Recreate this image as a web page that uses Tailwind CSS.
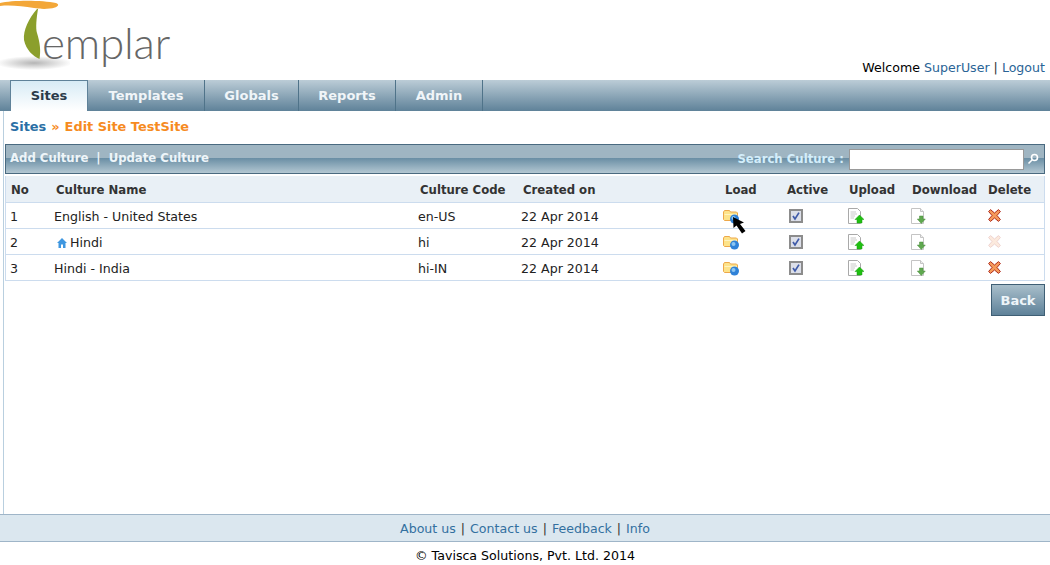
<!DOCTYPE html>
<html lang="en">
<head>
    <meta charset="UTF-8">
    <title>Templar</title>
    <script src="https://cdn.jsdelivr.net/npm/@tailwindcss/browser@4"></script>
</head>
<body class="bg-white font-['DejaVu_Sans',sans-serif] text-[12.6px] text-[#222] h-[565px] overflow-hidden flex flex-col">
    <svg class="hidden">
        <symbol id="folder" viewBox="0 0 17 16">
            <path d="M0.5 4 L1.5 2.5 H6.5 L7.5 4 H13.5 L14.5 5 V12.5 H1.5 L0.5 11.5 Z" fill="#fde38a" stroke="#eda84a"/>
            <path d="M1.5 6.5 H14" stroke="#fff3c0"/>
            <circle cx="11.5" cy="11" r="4.5" fill="#2f82d8"/>
            <circle cx="10.5" cy="10" r="2" fill="#8cc6f2"/>
        </symbol>
        <symbol id="check" viewBox="0 0 14 14">
            <rect x="1" y="1" width="12" height="12" fill="#dcdfe9" stroke="#8c8c8c" stroke-width="2"/>
            <path d="M4 7 L6 10 L10 3.6" fill="none" stroke="#3f5aa8" stroke-width="1.7"/>
        </symbol>
        <symbol id="upload" viewBox="0 0 16 16">
            <path d="M0.5 0.5 H9.5 L12.5 3.5 V15.5 H0.5 Z" fill="#fff" stroke="#a9a9a9"/>
            <path d="M2.5 4 H8 M2.5 6 H9 M2.5 8 H7 M2.5 10 H6" stroke="#c9c9c9"/>
            <path d="M11.5 7 L16 11.5 H14 V15 H9 V11.5 H7 Z" fill="#1fc010" stroke="#1b9a10" stroke-width="0.5"/>
        </symbol>
        <symbol id="download" viewBox="0 0 16 16">
            <path d="M0.5 0.5 H9.5 L12.5 3.5 V15.5 H0.5 Z" fill="#fff" stroke="#c4c4c4"/>
            <path d="M9.5 0.5 V3.5 H12.5" fill="#eee" stroke="#c4c4c4"/>
            <path d="M8.5 8 H12 V11 H14.3 L10.3 15.5 L6.3 11 H8.5 Z" fill="#5fa84f" stroke="#4a8c3d" stroke-width="0.5"/>
        </symbol>
        <symbol id="cross" viewBox="0 0 13 13">
            <path d="M2.5 0.6 L6.5 4 L10.5 0.6 L12.4 2.5 L9 6.5 L12.4 10.5 L10.5 12.4 L6.5 9 L2.5 12.4 L0.6 10.5 L4 6.5 L0.6 2.5 Z" fill="#f59a5a" stroke="#a81c10" stroke-width="0.9"/>
        </symbol>
    </svg>

    <!-- Header -->
    <header class="h-[80px] shrink-0 flex justify-between items-end">
        <div class="relative w-[180px] h-[80px]">
            <svg class="absolute left-0 top-0" width="70" height="75" viewBox="0 0 70 75">
                <defs>
                    <radialGradient id="shade">
                        <stop offset="0" stop-color="#b5b5b5"/>
                        <stop offset="1" stop-color="#ffffff"/>
                    </radialGradient>
                </defs>
                <ellipse cx="34" cy="63" rx="38" ry="7" fill="url(#shade)"/>
                <path d="M0 3 C12 0 42 0 56 3 C59 4 59 6 55 7.5 C48 9.5 40 9 34 8 C22 6 10 5 0 6 Z" fill="#f3a738"/>
                <path d="M37 9 C29 18 23 30 24 40 C26 50 33 56 39.5 59 C41 50 40 43 37 33 C35.5 28 36.5 18 38 9 Z" fill="#8b9f2c"/>
            </svg>
            <span class="absolute left-[42px] top-[14px] font-['Lato',sans-serif] font-light text-[44px] leading-[56px] tracking-[-0.2px] text-[#666]">emplar</span>
        </div>
        <div class="pr-[5px] pb-[2px]">
            <span class="text-black">Welcome</span>
            <a class="text-[#2a6496]">SuperUser</a>
            <span class="text-[#333]">|</span>
            <a class="text-[#2a6496]">Logout</a>
        </div>
    </header>

    <!-- Tabs -->
    <nav class="h-[31px] shrink-0 pl-[10px] flex bg-gradient-to-b from-[#bccdd7] to-[#5f8299] text-[13px] font-bold">
        <a class="h-full w-[78px] flex items-center justify-center border-x border-t border-[#5f8299] bg-gradient-to-b from-[#d7ebf5] to-white text-[#2b3b4a]">Sites</a>
        <a class="h-full w-[117px] flex items-center justify-center border-r border-[#4f7389] text-[#f0f5f8]">Templates</a>
        <a class="h-full w-[94px] flex items-center justify-center border-r border-[#4f7389] text-[#f0f5f8]">Globals</a>
        <a class="h-full w-[97px] flex items-center justify-center border-r border-[#4f7389] text-[#f0f5f8]">Reports</a>
        <a class="h-full w-[87px] flex items-center justify-center border-r border-[#4f7389] text-[#f0f5f8]">Admin</a>
    </nav>

    <!-- Main -->
    <main class="relative flex-1 ml-[3px] mr-[5px] pl-px border-l border-[#b9cfdf]">
        <div class="h-[33px] pl-[5px] pb-[2px] flex items-center gap-[5px] text-[12.9px] font-bold">
            <a class="text-[#2a6fa5]">Sites</a>
            <span class="text-[#f68b1f]">»</span>
            <span class="text-[#f68b1f]">Edit Site TestSite</span>
        </div>

        <div class="h-[30px] flex items-center justify-between pl-[4px] pr-[5px] border border-[#4a6a80] bg-[linear-gradient(to_bottom,#9fb5c2_0%,#9fb5c2_47%,#6b8fa5_48%,#b3c7d2_100%)] text-[11.7px] font-bold text-[#eef5f9]">
            <div class="flex gap-[8px]">
                <a>Add Culture</a>
                <span>|</span>
                <a>Update Culture</a>
            </div>
            <div class="flex items-center">
                <span class="text-[#d3eefb] mr-[5px] pt-px">Search Culture :</span>
                <input type="text" class="w-[175px] h-[21px] bg-white border border-[#999]">
                <svg class="ml-[3px]" width="12" height="12" viewBox="0 0 12 12" fill="none" stroke="#fff" stroke-width="1.6">
                    <circle cx="7.5" cy="4.5" r="3"/>
                    <path d="M5 7 L1.5 10.5"/>
                </svg>
            </div>
        </div>

        <!-- Table -->
        <div class="mt-[2px] border-x border-b border-[#ccdcee]">
            <div class="h-[27px] pl-[4px] grid grid-cols-[44px_364px_103px_204px_62px_62px_63px_76px_1fr] items-center bg-[#e9f0f6] border-b border-[#ccdcee] text-[11.7px] font-bold text-[#333] [&>span]:pt-[4px]">
                <span class="pl-px">No</span>
                <span class="pl-[2px]">Culture Name</span>
                <span class="pl-[2px]">Culture Code</span>
                <span class="pl-[2px]">Created on</span>
                <span>Load</span>
                <span>Active</span>
                <span>Upload</span>
                <span>Download</span>
                <span>Delete</span>
            </div>

            <div class="h-[26px] pl-[4px] grid grid-cols-[44px_364px_103px_204px_62px_62px_63px_76px_1fr] items-center border-b border-[#ccdcee] [&>span]:pt-[4px]">
                <span>1</span>
                <span>English - United States</span>
                <span>en-US</span>
                <span>22 Apr 2014</span>
                <svg class="-ml-[2px]" width="17" height="16"><use href="#folder"/></svg>
                <svg class="ml-[2px]" width="14" height="14"><use href="#check"/></svg>
                <svg class="-ml-px" width="16" height="16"><use href="#upload"/></svg>
                <svg class="-ml-px" width="16" height="16"><use href="#download"/></svg>
                <svg width="13" height="13"><use href="#cross"/></svg>
            </div>

            <div class="h-[26px] pl-[4px] grid grid-cols-[44px_364px_103px_204px_62px_62px_63px_76px_1fr] items-center border-b border-[#ccdcee] [&>span]:pt-[4px]">
                <span>2</span>
                <span class="flex items-center pl-[3px] gap-[3px]">
                    <svg width="10" height="10" viewBox="0 0 10 10" fill="#3f97e0">
                        <path d="M5 0 L10 5 H8.5 V10 H6 V6.5 H4 V10 H1.5 V5 H0 Z"/>
                    </svg>
                    Hindi
                </span>
                <span>hi</span>
                <span>22 Apr 2014</span>
                <svg class="-ml-[2px]" width="17" height="16"><use href="#folder"/></svg>
                <svg class="ml-[2px]" width="14" height="14"><use href="#check"/></svg>
                <svg class="-ml-px" width="16" height="16"><use href="#upload"/></svg>
                <svg class="-ml-px" width="16" height="16"><use href="#download"/></svg>
                <svg class="opacity-20" width="13" height="13"><use href="#cross"/></svg>
            </div>

            <div class="h-[25px] pl-[4px] grid grid-cols-[44px_364px_103px_204px_62px_62px_63px_76px_1fr] items-center [&>span]:pt-[4px]">
                <span>3</span>
                <span>Hindi - India</span>
                <span>hi-IN</span>
                <span>22 Apr 2014</span>
                <svg class="-ml-[2px]" width="17" height="16"><use href="#folder"/></svg>
                <svg class="ml-[2px]" width="14" height="14"><use href="#check"/></svg>
                <svg class="-ml-px" width="16" height="16"><use href="#upload"/></svg>
                <svg class="-ml-px" width="16" height="16"><use href="#download"/></svg>
                <svg width="13" height="13"><use href="#cross"/></svg>
            </div>
        </div>

        <div class="mt-[3px] flex justify-end">
            <button class="w-[54px] h-[32px] pt-[2px] border border-[#3f5f75] bg-gradient-to-b from-[#a9bfcb] to-[#5f8299] text-[13px] font-bold text-[#eef5f9]">Back</button>
        </div>

        <!-- mouse pointer -->
        <svg class="absolute left-[729px] top-[106px]" width="13" height="17" viewBox="0 0 13 17" fill="#000">
            <path d="M0 0 L0.5 11 L3.5 8.5 L9 16.5 L12.5 14 L7 7 L11 5.5 Z"/>
        </svg>
    </main>

    <!-- Footer -->
    <footer class="shrink-0">
        <div class="h-[28px] pt-[3px] flex items-center justify-center gap-[5px] bg-[#dbe7ef] border-y border-[#9fb5c8] text-[#333]">
            <a class="text-[#33709f]">About us</a>
            <span>|</span>
            <a class="text-[#33709f]">Contact us</a>
            <span>|</span>
            <a class="text-[#33709f]">Feedback</a>
            <span>|</span>
            <a class="text-[#33709f]">Info</a>
        </div>
        <div class="h-[23px] pt-[5px] flex items-center justify-center text-black">© Tavisca Solutions, Pvt. Ltd. 2014</div>
    </footer>
</body>
</html>
